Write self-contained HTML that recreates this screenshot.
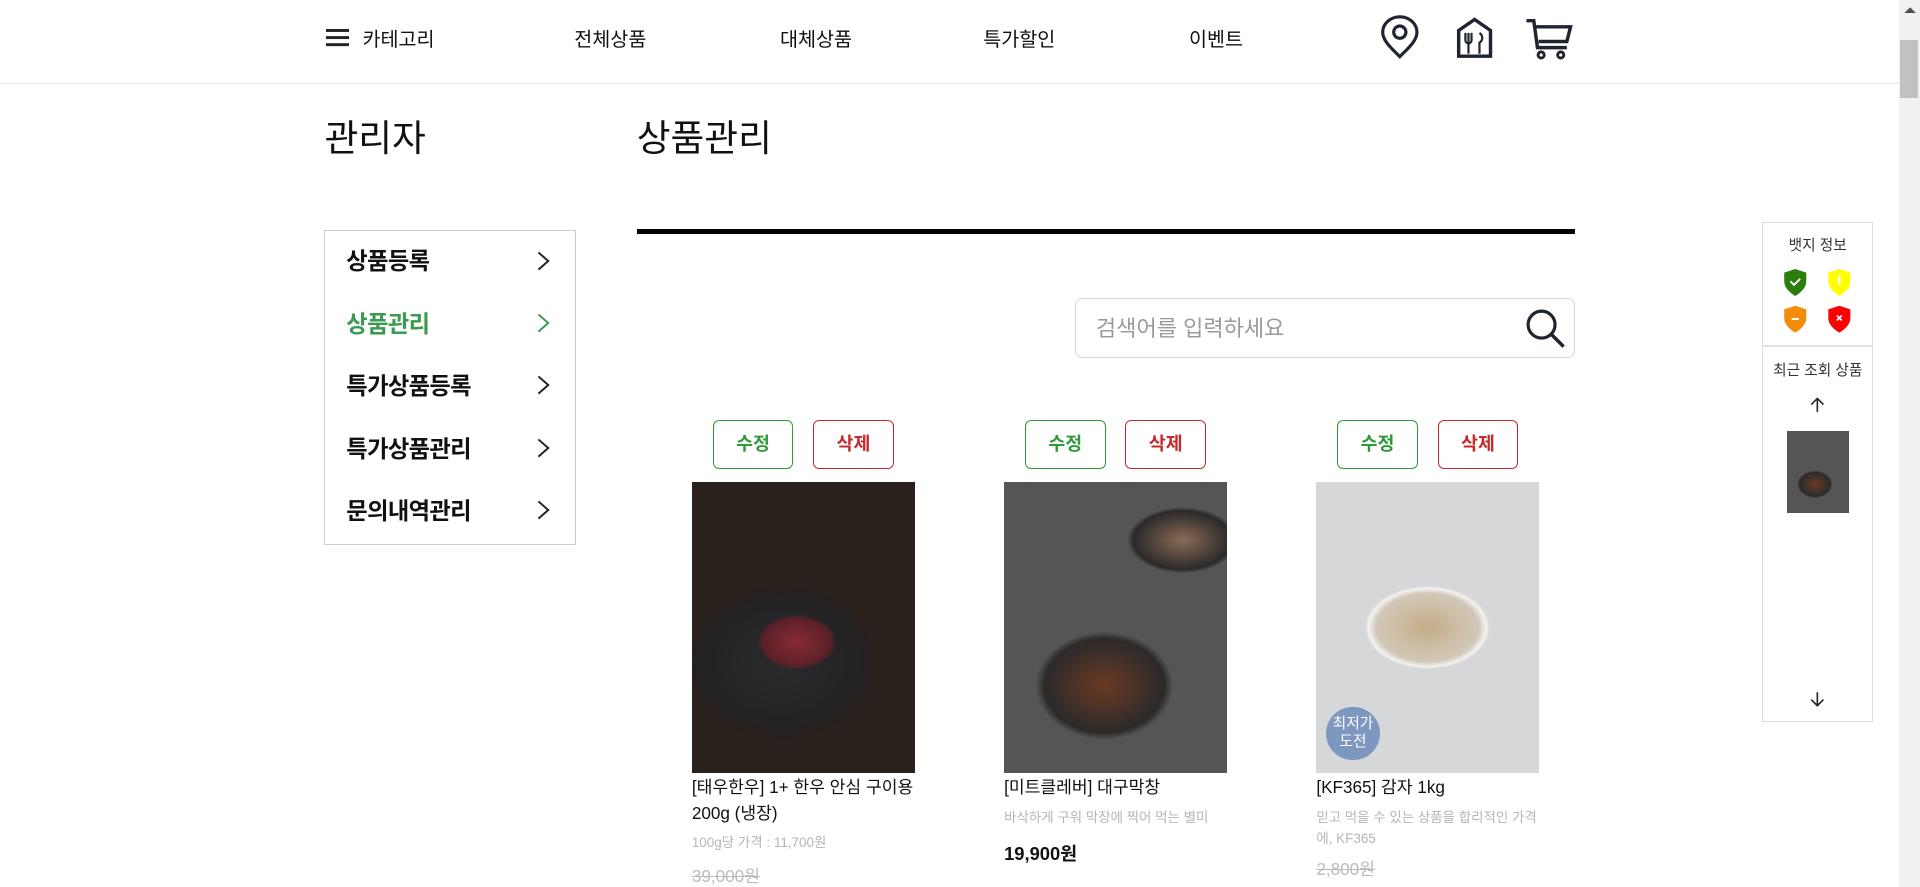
<!DOCTYPE html>
<html><head><meta charset="utf-8">
<style>
html{zoom:1.22449}
*{margin:0;padding:0;box-sizing:border-box}
body{width:1568px;height:724px;overflow:hidden;background:#fff;font-family:"Liberation Sans","Noto Sans CJK KR",sans-serif;color:#111;position:relative}
.a{position:absolute}
.hdr{left:0;top:0;width:1551px;height:69px;border-bottom:1px solid #e3e3e6}
.nav{font-size:16px;top:19px}
.sb{right:0;top:0;width:17px;height:724px;background:#f1f1f1}
.side{left:265px;top:188px;width:205px;height:257px;border:1px solid #ccc}
.side div{position:absolute;left:17px;font-size:19px;font-weight:bold;letter-spacing:-0.5px}
.side svg{position:absolute;left:172px}
.btn{width:66px;height:40px;border:1px solid;border-radius:5px;font-size:15px;font-weight:bold;text-align:center;line-height:38px;background:#fff}
.g{color:#2f9a3a;border-color:#2f9a3a}.r{color:#c8282b;border-color:#c8282b}
.t{font-size:14px;line-height:21px;width:185px}
.d{font-size:11px;color:#b5b5b5;line-height:17px;width:185px}
.s{font-size:14px;color:#bbb;text-decoration:line-through}
</style></head><body>
<div class="a hdr"></div>
<svg class="a" style="left:266px;top:24px" width="19" height="14"><rect y="0" width="19" height="2.4" fill="#222"/><rect y="5.8" width="19" height="2.4" fill="#222"/><rect y="11.6" width="19" height="2.4" fill="#222"/></svg>
<div class="a nav" style="left:296px">카테고리</div>
<div class="a nav" style="left:469px">전체상품</div>
<div class="a nav" style="left:637px">대체상품</div>
<div class="a nav" style="left:803px">특가할인</div>
<div class="a nav" style="left:971px">이벤트</div>
<svg class="a" style="left:1126px;top:12px" width="34" height="36" viewBox="0 0 34 36"><path d="M17 34 C10 27 3 21 3 14 A14 12.5 0 0 1 31 14 C31 21 24 27 17 34Z" fill="none" stroke="#1f2430" stroke-width="2.6"/><circle cx="17" cy="14" r="5" fill="none" stroke="#1f2430" stroke-width="2.6"/></svg>
<svg class="a" style="left:1188px;top:14px" width="32" height="34" viewBox="0 0 32 34"><path d="M3 32V11L16 2 29 11V32Z" fill="none" stroke="#1f2430" stroke-width="2.8"/><path d="M11 13v17M8.5 13v6a2.5 2.5 0 0 0 5 0v-6M20 13c3 2 3 6 0 8v9" fill="none" stroke="#1f2430" stroke-width="1.8"/></svg>
<svg class="a" style="left:1245px;top:14px" width="40" height="36" viewBox="0 0 40 36"><path d="M2 3h6l3 22h24M10 8h28l-3 12H12" fill="none" stroke="#1f2430" stroke-width="2.8"/><circle cx="14" cy="31" r="2.5" fill="none" stroke="#1f2430" stroke-width="2.4"/><circle cx="30" cy="31" r="2.5" fill="none" stroke="#1f2430" stroke-width="2.4"/></svg>

<div class="a" style="left:265px;top:88px;font-size:30px">관리자</div>
<div class="a" style="left:520px;top:88px;font-size:30px">상품관리</div>
<div class="a" style="left:520px;top:187px;width:766px;height:4px;background:#000"></div>

<div class="a side">
<div style="top:9px">상품등록</div>
<div style="top:60px;color:#3a9a4f">상품관리</div>
<div style="top:111px">특가상품등록</div>
<div style="top:162px">특가상품관리</div>
<div style="top:213px">문의내역관리</div>
<svg style="top:15px" width="12" height="18"><path d="M2 2l8 7-8 7" fill="none" stroke="#222" stroke-width="1.6"/></svg>
<svg style="top:66px" width="12" height="18"><path d="M2 2l8 7-8 7" fill="none" stroke="#3a9a4f" stroke-width="1.6"/></svg>
<svg style="top:117px" width="12" height="18"><path d="M2 2l8 7-8 7" fill="none" stroke="#222" stroke-width="1.6"/></svg>
<svg style="top:168px" width="12" height="18"><path d="M2 2l8 7-8 7" fill="none" stroke="#222" stroke-width="1.6"/></svg>
<svg style="top:219px" width="12" height="18"><path d="M2 2l8 7-8 7" fill="none" stroke="#222" stroke-width="1.6"/></svg>
</div>

<div class="a" style="left:878px;top:243px;width:408px;height:49px;border:1px solid #d5d8de;border-radius:6px"></div>
<div class="a" style="left:895px;top:254px;font-size:18px;color:#9a9a9a">검색어를 입력하세요</div>
<svg class="a" style="left:1243px;top:249px" width="38" height="38" viewBox="0 0 38 38"><circle cx="16" cy="16" r="11" fill="none" stroke="#1f2430" stroke-width="2.6"/><path d="M24 24l10 10" stroke="#1f2430" stroke-width="2.8"/></svg>

<div class="a btn g" style="left:582px;top:343px">수정</div><div class="a btn r" style="left:664px;top:343px">삭제</div>
<div class="a btn g" style="left:837px;top:343px">수정</div><div class="a btn r" style="left:919px;top:343px">삭제</div>
<div class="a btn g" style="left:1092px;top:343px">수정</div><div class="a btn r" style="left:1174px;top:343px">삭제</div>

<div class="a" style="left:565px;top:394px;width:182px;height:237px;background:radial-gradient(ellipse 40px 28px at 47% 55%,#8a2a35,#5a2028 70%,transparent 80%),radial-gradient(ellipse 85px 70px at 40% 62%,#2a2a2e,#232122 80%,transparent 90%),#2a201c"></div>
<div class="a" style="left:820px;top:394px;width:182px;height:237px;background:radial-gradient(ellipse 70px 55px at 45% 70%,#6b3a22,#2b2a2b 70%,transparent 80%),radial-gradient(ellipse 50px 30px at 80% 20%,#8b6a55,#2a2a2a 80%,transparent 90%),#555"></div>
<div class="a" style="left:1075px;top:394px;width:182px;height:237px;background:radial-gradient(ellipse 60px 40px at 50% 50%,#c4ad88,#d2c8b8 70%,#f2f2f0 80%,transparent 85%),#d6d7d8"></div>
<div class="a" style="left:1083px;top:577px;width:44px;height:44px;border-radius:50%;background:#7e97bf;color:#fff;font-size:12px;text-align:center;line-height:15px;padding-top:7px">최저가<br>도전</div>

<div class="a t" style="left:565px;top:633px">[태우한우] 1+ 한우 안심 구이용 200g (냉장)</div>
<div class="a d" style="left:565px;top:680px">100g당 가격 : 11,700원</div>
<div class="a s" style="left:565px;top:704px">39,000원</div>
<div class="a t" style="left:820px;top:633px">[미트클레버] 대구막창</div>
<div class="a d" style="left:820px;top:660px">바삭하게 구워 막장에 찍어 먹는 별미</div>
<div class="a" style="left:820px;top:686px;font-size:15px;font-weight:bold">19,900원</div>
<div class="a t" style="left:1075px;top:633px">[KF365] 감자 1kg</div>
<div class="a d" style="left:1075px;top:660px">믿고 먹을 수 있는 상품을 합리적인 가격에, KF365</div>
<div class="a s" style="left:1075px;top:698px">2,800원</div>

<div class="a" style="left:1439px;top:181px;width:91px;height:409px;border:1px solid #dcdde2;background:#fff"></div>
<div class="a" style="left:1440px;top:282px;width:89px;height:1px;background:#e3e3e6"></div>
<div class="a" style="left:1440px;top:191px;width:89px;text-align:center;font-size:12px;color:#333">뱃지 정보</div>
<svg class="a" style="left:1456px;top:220px" width="60" height="55" viewBox="0 0 60 55"><path d="M1 3l9-3 9 3v7c0 5-4 9-9 12-5-3-9-7-9-12z" fill="#2b7d0c"/><path d="M6 10l3 3 5-5" fill="none" stroke="#fff" stroke-width="1.5"/><path d="M37 3l9-3 9 3v7c0 5-4 9-9 12-5-3-9-7-9-12z" fill="#ffff00"/><rect x="45" y="5" width="2" height="8" fill="#fff"/><path d="M1 33l9-3 9 3v7c0 5-4 9-9 12-5-3-9-7-9-12z" fill="#f28c0a"/><rect x="7" y="40" width="6" height="1.6" fill="#fff"/><path d="M37 33l9-3 9 3v7c0 5-4 9-9 12-5-3-9-7-9-12z" fill="#f00"/><path d="M44 38l4 4M48 38l-4 4" stroke="#fff" stroke-width="1.4"/></svg>
<div class="a" style="left:1440px;top:293px;width:89px;text-align:center;font-size:12px;color:#333">최근 조회 상품</div>
<svg class="a" style="left:1478px;top:323px" width="12" height="14"><path d="M6 13V2M1 7l5-5 5 5" fill="none" stroke="#222" stroke-width="1.3"/></svg>
<div class="a" style="left:1459px;top:352px;width:51px;height:67px;background:radial-gradient(ellipse 18px 14px at 45% 65%,#6b3a22,#2b2a2b 70%,transparent 80%),#555"></div>
<svg class="a" style="left:1478px;top:564px" width="12" height="14"><path d="M6 1v11M1 7l5 5 5-5" fill="none" stroke="#222" stroke-width="1.3"/></svg>

<div class="a sb"></div>
<div class="a" style="left:1552px;top:33px;width:14px;height:47px;background:#c1c1c1"></div>
<svg class="a" style="left:1555px;top:5px" width="10" height="6"><path d="M0 6l5-5 5 5z" fill="#505050"/></svg>
</body></html>
